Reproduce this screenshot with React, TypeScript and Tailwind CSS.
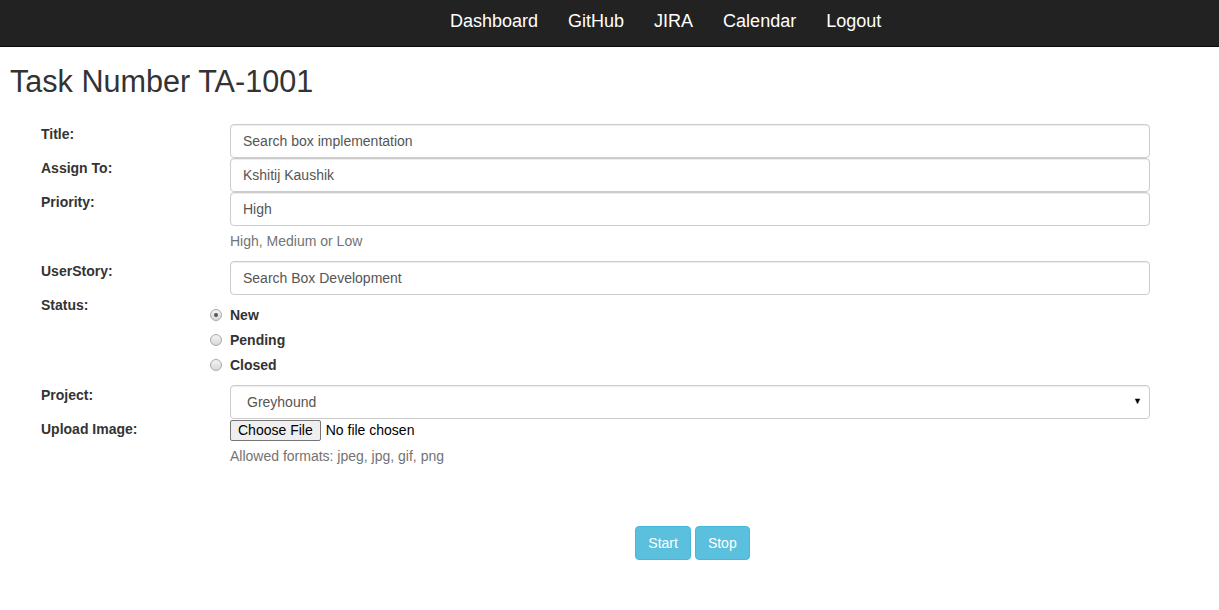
import React from 'react';

const font = { fontFamily: '"Liberation Sans", Arial, Helvetica, sans-serif' };

function Row({ label, children }: { label: string; children: React.ReactNode }) {
  return (
    <div className="grid grid-cols-[190px_920px]">
      <div className="text-[14px] leading-[20px] font-bold text-[#333] pl-[1px]">{label}</div>
      <div>{children}</div>
    </div>
  );
}

function TextInput({ value }: { value: string }) {
  return (
    <input
      readOnly
      value={value}
      className="w-full h-[34px] px-[12px] border border-[#ccc] rounded-[4px] text-[14px] text-[#555] bg-white shadow-[inset_0_1px_1px_rgba(0,0,0,0.075)] outline-none"
      style={font}
    />
  );
}

function Radio({ label, checked }: { label: string; checked?: boolean }) {
  return (
    <label className="flex items-center h-[20px] relative pl-[20px] -ml-[20px]">
      <span className="absolute left-0 top-[4px] w-[12px] h-[12px] rounded-full border border-[#a9a9a9] bg-gradient-to-b from-[#f4f4f4] to-[#d8d8d8] flex items-center justify-center">
        {checked && <span className="w-[4px] h-[4px] rounded-full bg-[#555]" />}
      </span>
      <span className="text-[14px] font-bold text-[#333]">{label}</span>
    </label>
  );
}

export default function App() {
  const links = ['Dashboard', 'GitHub', 'JIRA', 'Calendar', 'Logout'];
  return (
    <div className="min-h-[610px] bg-white" style={font}>
      <nav className="h-[47px] bg-[#222] border-b border-[#080808] flex items-center pl-[435px] pb-[5px]">
        {links.map((l) => (
          <a key={l} className="px-[15px] text-[18px] text-white leading-[20px]">
            {l}
          </a>
        ))}
      </nav>

      <h1 className="mt-[18px] ml-[10px] text-[30.6px] leading-[33px] text-[#333] font-normal">Task Number TA-1001</h1>

      <form className="mt-[26px] pl-[40px]">
        <Row label="Title:">
          <TextInput value="Search box implementation" />
        </Row>
        <Row label="Assign To:">
          <TextInput value="Kshitij Kaushik" />
        </Row>
        <Row label="Priority:">
          <TextInput value="High" />
          <p className="mt-[5px] mb-[10px] text-[14px] leading-[20px] text-[#737373]">High, Medium or Low</p>
        </Row>
        <Row label="UserStory:">
          <TextInput value="Search Box Development" />
        </Row>
        <Row label="Status:">
          <div className="pt-[10px] pb-[10px] flex flex-col gap-[5px]">
            <Radio label="New" checked />
            <Radio label="Pending" />
            <Radio label="Closed" />
          </div>
        </Row>
        <Row label="Project:">
          <div className="relative">
            <div className="w-full h-[34px] pl-[16px] border border-[#ccc] rounded-[4px] text-[14px] text-[#555] flex items-center shadow-[inset_0_1px_1px_rgba(0,0,0,0.075)]">
              Greyhound
            </div>
            <span className="absolute right-[8px] top-[10px] text-[9px] text-black">▼</span>
          </div>
        </Row>
        <Row label="Upload Image:">
          <div className="flex items-center pt-[1px]">
            <span className="h-[21px] px-[7px] border border-[#767676] rounded-[2px] bg-[#efefef] text-[14px] text-black flex items-center">
              Choose File
            </span>
            <span className="ml-[5px] text-[14px] text-black">No file chosen</span>
          </div>
          <p className="mt-[5px] text-[14px] leading-[20px] text-[#737373]">Allowed formats: jpeg, jpg, gif, png</p>
        </Row>
        <div className="grid grid-cols-[190px_920px] mt-[60px]">
          <div />
          <div className="flex justify-center gap-[4px] pl-[5px]">
            <button type="button" className="h-[34px] px-[12px] bg-[#5bc0de] border border-[#46b8da] rounded-[4px] text-[14px] text-white">
              Start
            </button>
            <button type="button" className="h-[34px] px-[12px] bg-[#5bc0de] border border-[#46b8da] rounded-[4px] text-[14px] text-white">
              Stop
            </button>
          </div>
        </div>
      </form>
    </div>
  );
}
